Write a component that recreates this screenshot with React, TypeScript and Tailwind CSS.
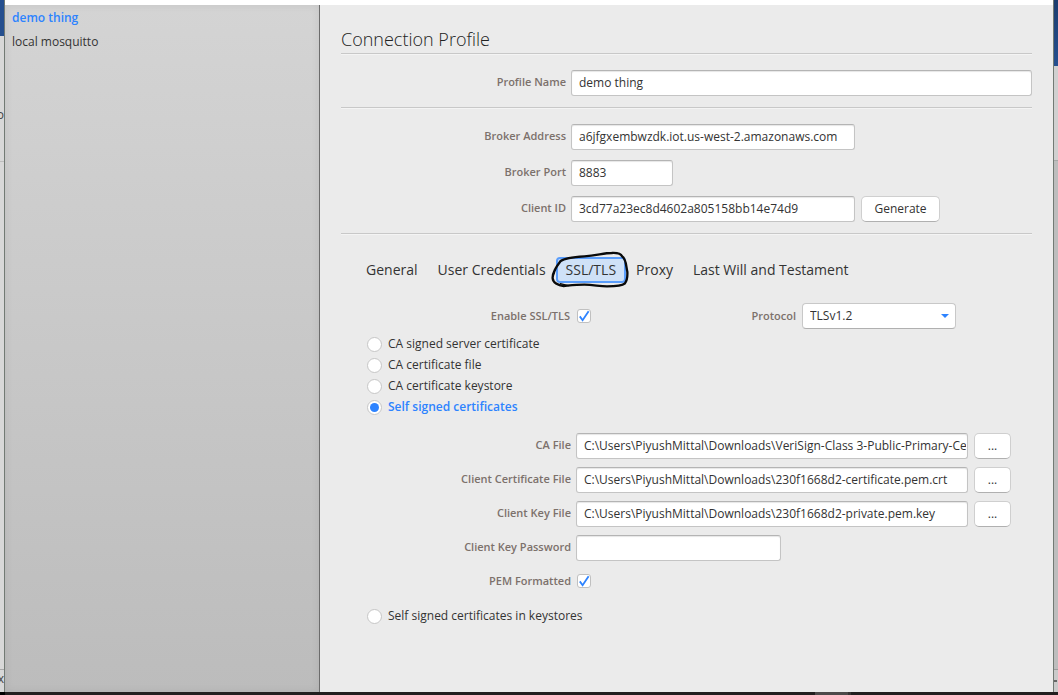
import { useState } from "react";
import type { ComponentProps, ReactNode } from "react";
import clsx from "clsx";

const profiles = ["demo thing", "local mosquitto"];
const tabs = ["General", "User Credentials", "SSL/TLS", "Proxy", "Last Will and Testament"];
const simpleModes = [
  "CA signed server certificate",
  "CA certificate file",
  "CA certificate keystore",
  "Self signed certificates",
];
const keystoreMode = "Self signed certificates in keystores";
const files = [
  { id: "ca-file", label: "CA File", value: "C:\\Users\\PiyushMittal\\Downloads\\VeriSign-Class 3-Public-Primary-Certification-Authority-G5.pem" },
  { id: "client-cert", label: "Client Certificate File", value: "C:\\Users\\PiyushMittal\\Downloads\\230f1668d2-certificate.pem.crt" },
  { id: "client-key", label: "Client Key File", value: "C:\\Users\\PiyushMittal\\Downloads\\230f1668d2-private.pem.key" },
];

function Label({ htmlFor, className, children }: { htmlFor: string; className?: string; children: ReactNode }) {
  return (
    <label
      htmlFor={htmlFor}
      className={clsx("shrink-0 text-right text-[11px] font-semibold whitespace-nowrap text-[#7c716b]", className)}
    >
      {children}
    </label>
  );
}

function TextField({ className, ...props }: ComponentProps<"input">) {
  return (
    <input
      {...props}
      className={clsx(
        "h-[26px] min-w-0 rounded-[3px] border border-[#c4c4c4] border-t-[#b4b4b4] bg-white pr-px pb-px pl-[7px] text-xs text-[#333] shadow-[inset_0_1px_1px_#e6e6e6] outline-none",
        className,
      )}
    />
  );
}

function PushButton({ className, ...props }: ComponentProps<"button">) {
  return (
    <button
      type="button"
      {...props}
      className={clsx(
        "ml-px h-[26px] shrink-0 rounded-[5px] border border-[#cfcfcf] border-b-[#b0b0b0] bg-white text-xs text-[#333]",
        className,
      )}
    />
  );
}

function CheckBox({ id }: { id: string }) {
  return (
    <span className="grid size-[14px] shrink-0 place-items-center">
      <input
        id={id}
        type="checkbox"
        defaultChecked
        className="peer col-start-1 row-start-1 size-[14px] appearance-none rounded-[3px] border border-[#c0c0c0] bg-white"
      />
      <svg
        viewBox="0 0 14 14"
        className="pointer-events-none invisible col-start-1 row-start-1 size-[14px] peer-checked:visible"
        fill="none"
        stroke="#2d83ff"
        strokeWidth="1.8"
      >
        <path d="M2.8 7.4 L5.6 11.2 L11.6 2.2" />
      </svg>
    </span>
  );
}

function Radio({ label, checked, onSelect }: { label: string; checked: boolean; onSelect: () => void }) {
  return (
    <label
      className={clsx(
        "flex items-center gap-[6px] text-xs",
        checked ? "font-semibold text-[#2d83ff]" : "text-[#333]",
      )}
    >
      <input
        type="radio"
        name="mode"
        checked={checked}
        onChange={onSelect}
        className="grid size-[15px] shrink-0 appearance-none place-items-center rounded-full border border-[#c6c6c6] bg-white before:size-[9px] before:rounded-full before:bg-transparent checked:before:bg-[#2d83ff]"
      />
      {label}
    </label>
  );
}

function Rule() {
  return <hr className="h-[2px] border-0 border-t border-[#c8c8c8] bg-[#f4f4f4]" />;
}

function InkCircle() {
  return (
    <svg
      viewBox="597 30 240 120"
      className="pointer-events-none absolute -top-2 -left-1.5 h-[40px] w-[80px]"
      fill="none"
      stroke="#0a0a0a"
      strokeLinecap="round"
      strokeLinejoin="round"
    >
      <path
        strokeWidth="7"
        d="M608 104 C612 86 622 76 629 66 C642 56 668 54 700 52 C738 49 760 42 782 42 C800 41 810 45 813 52 C826 60 825 82 829 98 C830 116 828 126 821 134 C812 142 792 142 768 142 C744 142 728 137 700 137 C676 137 660 139 638 141 C620 140 606 130 605 118 C604 106 609 98 613 90"
      />
      <path strokeWidth="4" d="M628 134 L652 140" />
    </svg>
  );
}

function LeftBackdrop() {
  return (
    <div aria-hidden="true" className="flex w-[4px] shrink-0 flex-col overflow-hidden bg-[#d8d8d8] text-xs text-[#444]">
      <div className="h-[36px] bg-[#254f8f]" />
      <div className="flex h-[125px] items-end justify-end pb-[38px]">o</div>
      <div className="flex-1 border-t border-[#bdbdbd]" />
      <div className="flex h-[23px] items-center justify-end border-t border-[#a8a8a8] pb-[4px]">x</div>
    </div>
  );
}

function RightBackdrop() {
  return (
    <div aria-hidden="true" className="flex w-[4px] shrink-0 flex-col bg-[#bdbdbd]">
      <div className="h-[66px] bg-linear-to-b from-[#1c3d6e] to-[#254f8f]" />
      <div className="h-[95px] border-b border-[#a8a8a8] bg-[#d0d0d0]" />
      <div className="flex-1" />
      <div className="flex h-[23px] items-center border-t border-[#9c9c9c] bg-[#cacaca]">
        <div className="h-[2px] w-[3px] bg-[#666]" />
      </div>
    </div>
  );
}

export default function App() {
  const [profile, setProfile] = useState("demo thing");
  const [tab, setTab] = useState("SSL/TLS");
  const [mode, setMode] = useState("Self signed certificates");

  return (
    <div className="flex min-h-screen flex-col bg-[#ebebeb] font-['Open_Sans','Noto_Sans',sans-serif] text-[#333]">
      <div className="flex flex-1">
        <LeftBackdrop />
        <div className="flex min-w-0 flex-1 flex-col border-x border-[#727a74]">
          <div className="h-[5px] bg-white" />
          <div className="flex flex-1">
            <nav className="flex w-[315px] shrink-0 flex-col border-r border-[#6c6c6c] bg-linear-to-b from-[#d4d4d4] to-[#bcbcbc] pt-px shadow-[inset_0_0_8px_rgba(0,0,0,0.08)]">
              {profiles.map((name) => (
                <button
                  key={name}
                  type="button"
                  onClick={() => setProfile(name)}
                  className={clsx(
                    "h-6 px-[7px] text-left text-xs",
                    profile === name ? "font-semibold text-[#2d83ff]" : "text-[#333]",
                  )}
                >
                  {name}
                </button>
              ))}
            </nav>

            <main className="min-w-0 flex-1 px-[21px] pt-[21px]">
              <h1 className="h-[27px] text-lg leading-[26px] font-light text-[#222]">Connection Profile</h1>
              <Rule />
              <div className="flex items-center gap-[5px] pt-[15px] pb-[11px]">
                <Label htmlFor="profile-name" className="w-[225px] pb-px">Profile Name</Label>
                <TextField id="profile-name" defaultValue="demo thing" className="flex-1" />
              </div>
              <Rule />
              <div className="flex flex-col gap-[10px] pt-[15px] pb-[11px]">
                <div className="flex items-center gap-[5px]">
                  <Label htmlFor="broker-address" className="w-[225px] pb-px">Broker Address</Label>
                  <TextField id="broker-address" defaultValue="a6jfgxembwzdk.iot.us-west-2.amazonaws.com" className="w-[284px]" />
                </div>
                <div className="flex items-center gap-[5px]">
                  <Label htmlFor="broker-port" className="w-[225px] pb-px">Broker Port</Label>
                  <TextField id="broker-port" defaultValue="8883" className="w-[102px]" />
                </div>
                <div className="flex items-center gap-[5px]">
                  <Label htmlFor="client-id" className="w-[225px] pb-px">Client ID</Label>
                  <TextField id="client-id" defaultValue="3cd77a23ec8d4602a805158bb14e74d9" className="w-[284px]" />
                  <PushButton className="w-[79px]">Generate</PushButton>
                </div>
              </div>
              <Rule />

              <div role="tablist" className="flex pt-[22px] pl-[15px]">
                {tabs.map((name) => (
                  <div key={name} className="relative">
                    <button
                      type="button"
                      role="tab"
                      aria-selected={tab === name}
                      onClick={() => setTab(name)}
                      className={clsx(
                        "h-[26px] rounded-[4px] border-2 px-2 text-sm leading-none whitespace-nowrap",
                        tab === name ? "border-[#5a9dfb] bg-[#cfe1f7]" : "border-transparent",
                      )}
                    >
                      {name}
                    </button>
                    {name === "SSL/TLS" && <InkCircle />}
                  </div>
                ))}
              </div>

              <div className="flex items-center pt-[20px]">
                <Label htmlFor="enable-ssl" className="mr-[7px] w-[229px]">Enable SSL/TLS</Label>
                <CheckBox id="enable-ssl" />
                <Label htmlFor="protocol" className="mr-1.5 w-[205px]">Protocol</Label>
                <div className="grid w-[154px] items-center">
                  <select
                    id="protocol"
                    className="col-start-1 row-start-1 h-[26px] appearance-none rounded-[4px] border border-[#c8c8c8] border-b-[#b0b0b0] bg-white px-[7px] text-xs text-[#333]"
                  >
                    <option>TLSv1.2</option>
                  </select>
                  <svg viewBox="0 0 8 4" className="pointer-events-none col-start-1 row-start-1 mr-[7px] h-[4px] w-[8px] justify-self-end" fill="#2d83ff">
                    <path d="M0 0h8L4 4z" />
                  </svg>
                </div>
              </div>

              <div className="flex flex-col items-start gap-[5px] pt-[7px] pl-[26px]">
                {simpleModes.map((name) => (
                  <Radio key={name} label={name} checked={mode === name} onSelect={() => setMode(name)} />
                ))}
              </div>

              <div className="flex flex-col gap-2 pt-[18px]">
                {files.map((file) => (
                  <div key={file.id} className="flex items-center gap-[5px]">
                    <Label htmlFor={file.id} className="w-[230px] pb-px">{file.label}</Label>
                    <TextField id={file.id} defaultValue={file.value} className="w-[392px]" />
                    <PushButton aria-label={"Browse for " + file.label} className="w-[37px]">...</PushButton>
                  </div>
                ))}
                <div className="flex items-center gap-[5px]">
                  <Label htmlFor="key-password" className="w-[230px] pb-px">Client Key Password</Label>
                  <TextField id="key-password" type="password" className="w-[205px]" />
                </div>
                <div className="flex h-6 items-center gap-[6px]">
                  <Label htmlFor="pem" className="w-[230px]">PEM Formatted</Label>
                  <CheckBox id="pem" />
                </div>
              </div>

              <div className="flex pt-[15px] pl-[26px]">
                <Radio label={keystoreMode} checked={mode === keystoreMode} onSelect={() => setMode(keystoreMode)} />
              </div>
            </main>
          </div>
        </div>
        <RightBackdrop />
      </div>
      <footer className="flex h-[3px] bg-[#221f1f]">
        <div className="w-[5px] bg-black" />
        <div className="ml-auto w-[33px] bg-[#4d4a4a]" />
        <div className="mr-[207px] w-[3px] bg-[#373434]" />
      </footer>
    </div>
  );
}
